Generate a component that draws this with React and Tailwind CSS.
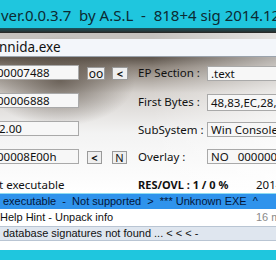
import React from "react";

function Field({ children, className = "" }) {
  return (
    <div
      className={
        "h-[15px] border border-[#a9a9a9] bg-[#f7f7f7] flex items-center overflow-hidden whitespace-pre text-[11.5px] leading-none text-[#111] " +
        className
      }
    >
      {children}
    </div>
  );
}

function Btn({ children, className = "" }) {
  return (
    <div
      className={
        "h-[13px] self-end shrink-0 border border-[#9a9a9a] bg-[#efefef] flex items-center justify-center text-[11px] leading-none font-bold text-[#111] " +
        className
      }
    >
      {children}
    </div>
  );
}

export default function App() {
  return (
    <div className="w-[276px] h-[260px] overflow-hidden bg-white flex flex-col font-['Noto_Sans',sans-serif]">
      {/* title bar */}
      <div className="h-[28px] shrink-0 bg-[#1fc6de] flex items-center whitespace-pre text-[15px] text-[#0c2b33] leading-none pt-[2px] overflow-hidden">
        <span className="ml-[1px]">ver.0.0.3.7  by A.S.L  -  818+4 sig 2014.12.09</span>
      </div>
      <div className="h-[5px] shrink-0 bg-[linear-gradient(to_bottom,#1a5560,#2a2622)]" />

      {/* main area */}
      <div className="h-[160px] shrink-0 flex flex-col bg-[linear-gradient(to_right,rgba(255,255,255,0)_55%,rgba(255,255,255,0.55)_100%),radial-gradient(ellipse_75px_45px_at_60px_48px,rgba(85,75,65,0.75),rgba(85,75,65,0)_100%),linear-gradient(to_bottom,#c4c1bd_0px,#c4c1bd_6px,#5f564d_25px,#8a8178_34px,#d6d2ce_60px,#f3f3f3_100px,#ffffff_160px)]">
        <div className="mt-[6px] h-[18px] bg-[#f3f6fa] border-b border-[#9aa3ad] flex items-center text-[13.5px] text-[#111] leading-none">
          <span className="-ml-[1px]">nnida.exe</span>
        </div>

        <div className="mt-[8px] flex flex-col gap-[13px]">
          {/* row 1 */}
          <div className="flex h-[15px]">
            <div className="w-[138px] shrink-0 flex">
              <Field className="w-[79px] border-l-0">
                <span className="-ml-[3px]">00007488</span>
              </Field>
              <Btn className="ml-[8px] w-[18px] font-normal text-[12px]">oo</Btn>
              <Btn className="ml-[7px] w-[16px]">&lt;</Btn>
            </div>
            <div className="w-[69px] shrink-0 text-[11.5px] leading-[15px] text-[#111]">EP Section :</div>
            <Field className="flex-1 mt-[1px] border-r-0 pl-[3px]">.text</Field>
          </div>
          {/* row 2 */}
          <div className="flex h-[15px]">
            <div className="w-[138px] shrink-0 flex">
              <Field className="w-[79px] border-l-0">
                <span className="-ml-[3px]">00006888</span>
              </Field>
            </div>
            <div className="w-[69px] shrink-0 text-[11.5px] leading-[15px] text-[#111] mt-[1px]">First Bytes :</div>
            <Field className="flex-1 mt-[1px] h-[17px] border-r-0 pl-[3px]">48,83,EC,28,48</Field>
          </div>
          {/* row 3 */}
          <div className="flex h-[15px]">
            <div className="w-[138px] shrink-0 flex">
              <Field className="w-[79px] border-l-0">
                <span className="-ml-[1px]">2.00</span>
              </Field>
            </div>
            <div className="w-[69px] shrink-0 text-[11.5px] leading-[15px] text-[#111] mt-[1px]">SubSystem :</div>
            <Field className="flex-1 mt-[1px] border-r-0 pl-[3px]">Win Console</Field>
          </div>
          {/* row 4 */}
          <div className="flex h-[15px]">
            <div className="w-[138px] shrink-0 flex">
              <Field className="w-[79px] border-l-0">
                <span className="-ml-[3px]">00008E00h</span>
              </Field>
              <Btn className="ml-[8px] w-[15px]">&lt;</Btn>
              <Btn className="ml-[10px] w-[15px] font-normal text-[10px]">N</Btn>
            </div>
            <div className="w-[69px] shrink-0 text-[11.5px] leading-[15px] text-[#111]">Overlay :</div>
            <Field className="flex-1 border-r-0 pl-[3px]">NO   00000000</Field>
          </div>
          {/* row 5 */}
          <div className="flex h-[15px] items-center text-[11.5px] text-[#111] leading-none whitespace-pre">
            <div className="w-[138px] shrink-0">
              <span className="-ml-[1px]">t executable</span>
            </div>
            <div className="w-[118px] shrink-0 font-bold text-[11px]">RES/OVL : 1 / 0 %</div>
            <div className="flex-1 overflow-hidden">2014</div>
          </div>
        </div>
      </div>

      {/* status area */}
      <div className="h-[1px] shrink-0 bg-[#8fdcf0]" />
      <div className="h-[15px] shrink-0 bg-[#2f93ec] flex items-center whitespace-pre font-['Liberation_Sans',sans-serif] text-[11px] leading-none text-[#04163a] overflow-hidden">
        <span className="ml-[3px]">executable  -  Not supported  &gt;  *** Unknown EXE  ^</span>
      </div>
      <div className="h-[17px] shrink-0 bg-white flex items-center whitespace-pre font-['Liberation_Sans',sans-serif] text-[11px] leading-none text-[#111] overflow-hidden">
        <span className="w-[256px] shrink-0">Help Hint - Unpack info</span>
        <span className="text-[#8a8a8a]">16 ms</span>
      </div>
      <div className="h-[15px] shrink-0 bg-[#dfe6ef] border-y border-[#b9c5d3] flex items-center whitespace-pre font-['Liberation_Sans',sans-serif] text-[11px] leading-none text-[#111]">
        <span className="ml-[3px]">database signatures not found ... &lt; &lt; &lt; -</span>
      </div>
      <div className="h-[9px] shrink-0 bg-white" />
      <div className="flex-1 bg-[#1fc6de]" />
    </div>
  );
}
